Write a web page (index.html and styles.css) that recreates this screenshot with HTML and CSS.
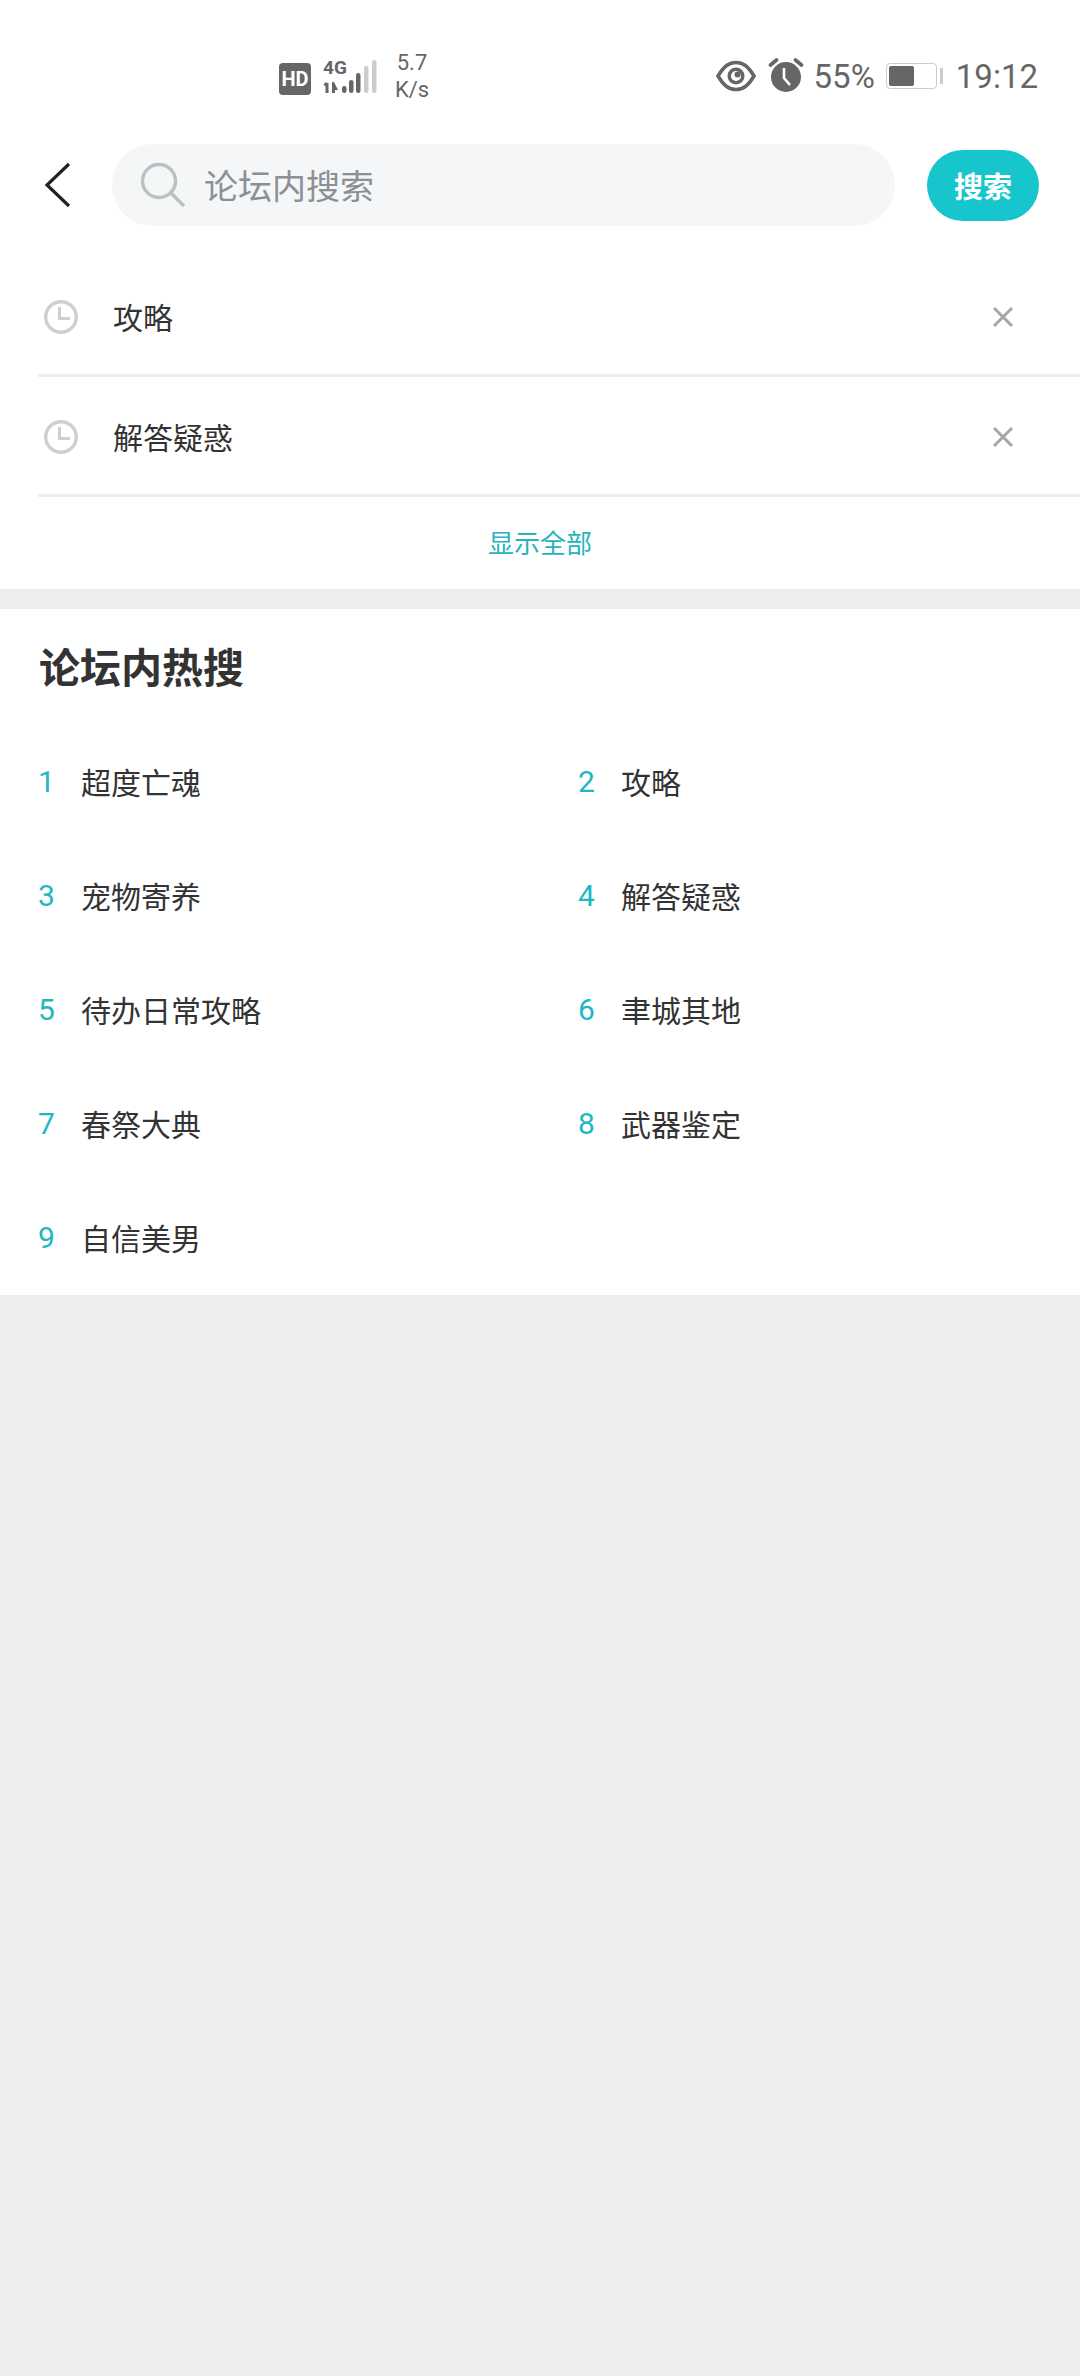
FILE: index.html
```html
<!DOCTYPE html>
<html lang="zh-CN">
<head>
  <meta charset="UTF-8">
  <meta name="viewport" content="width=device-width, initial-scale=1.0">
  <title>论坛内搜索</title>
  <link rel="stylesheet" href="styles.css">
</head>
<body>
  <div class="top">
    <!-- Status bar -->
    <div class="status-bar">
      <div class="status-left">
        <span class="hd">HD</span>
        <svg class="signal" width="54" height="46" viewBox="0 -8 54 46">
          <text x="0" y="14" class="signal-text">4G</text>
          <path d="M4 23v10M1.500 25.500l2.500-2.500" stroke="#666" stroke-width="3" fill="none"/>
          <path d="M9 22h2l4 8h-3v3h-3z" fill="#666"/>
          <rect x="19" y="26" width="4.500" height="7" rx="2.200" fill="#666"/>
          <rect x="26" y="20" width="4.500" height="13" rx="2.200" fill="#666"/>
          <rect x="33" y="13" width="4.500" height="20" rx="2.200" fill="#666"/>
          <rect x="41" y="6" width="4.500" height="27" rx="2.200" fill="#ccc"/>
          <rect x="49" y="0" width="4.500" height="33" rx="2.200" fill="#ccc"/>
        </svg>
        <div class="speed">5.7<br>K/s</div>
      </div>
      <div class="status-right">
        <svg width="40" height="32" viewBox="0 0 40 32">
          <path d="M2 16C8 6 13 2.500 20 2.500S32 6 38 16c-6 10-11 13.500-18 13.500S8 26 2 16z" fill="none" stroke="#666" stroke-width="3.600"/>
          <circle cx="20" cy="16" r="8.500" fill="#666"/>
          <circle cx="20" cy="16" r="5" fill="#fff"/>
          <circle cx="21.500" cy="14.500" r="3" fill="#666"/>
        </svg>
        <svg class="alarm" width="36" height="36" viewBox="0 0 36 36">
          <circle cx="18" cy="20" r="15" fill="#666"/>
          <path d="M2.500 8l6-5M33.500 8l-6-5" stroke="#666" stroke-width="3.600" stroke-linecap="round"/>
          <path d="M16 11v10l6 7" stroke="#fff" stroke-width="2.600" fill="none"/>
        </svg>
        <span class="battery-text">55%</span>
        <div class="battery">
          <div class="battery-body"><div class="battery-level"></div></div>
          <div class="battery-tip"></div>
        </div>
        <span class="clock">19:12</span>
      </div>
    </div>

    <!-- Search -->
    <div class="search-bar">
      <svg class="back" width="28" height="46" viewBox="0 0 28 46">
        <path d="M25 2L3 23l22 21" fill="none" stroke="#222" stroke-width="3.200"/>
      </svg>
      <div class="search-box">
        <svg width="46" height="46" viewBox="0 0 46 46">
          <circle cx="19" cy="19" r="16.500" fill="none" stroke="#b9c1c1" stroke-width="3.400"/>
          <path d="M31 31l13 13" stroke="#b9c1c1" stroke-width="3.400"/>
        </svg>
        <span class="placeholder">论坛内搜索</span>
      </div>
      <button class="search-btn">搜索</button>
    </div>

    <!-- History -->
    <div class="history">
      <div class="history-row">
        <svg width="34" height="34" viewBox="0 0 34 34">
          <circle cx="17" cy="17" r="15.300" fill="none" stroke="#cfcfcf" stroke-width="3.400"/>
          <path d="M15.500 7v11.500H26" fill="none" stroke="#cfcfcf" stroke-width="3"/>
        </svg>
        <span class="history-text">攻略</span>
        <svg class="close" width="22" height="22" viewBox="0 0 22 22">
          <path d="M2 2l18 18M20 2L2 20" stroke="#a6a6a6" stroke-width="3"/>
        </svg>
      </div>
      <div class="history-row">
        <svg width="34" height="34" viewBox="0 0 34 34">
          <circle cx="17" cy="17" r="15.300" fill="none" stroke="#cfcfcf" stroke-width="3.400"/>
          <path d="M15.500 7v11.500H26" fill="none" stroke="#cfcfcf" stroke-width="3"/>
        </svg>
        <span class="history-text">解答疑惑</span>
        <svg class="close" width="22" height="22" viewBox="0 0 22 22">
          <path d="M2 2l18 18M20 2L2 20" stroke="#a6a6a6" stroke-width="3"/>
        </svg>
      </div>
      <div class="show-all">显示全部</div>
    </div>
  </div>

  <!-- Hot searches -->
  <div class="hot">
    <h2>论坛内热搜</h2>
    <div class="hot-grid">
      <div class="hot-item"><span class="num">1</span>超度亡魂</div>
      <div class="hot-item"><span class="num">2</span>攻略</div>
      <div class="hot-item"><span class="num">3</span>宠物寄养</div>
      <div class="hot-item"><span class="num">4</span>解答疑惑</div>
      <div class="hot-item"><span class="num">5</span>待办日常攻略</div>
      <div class="hot-item"><span class="num">6</span>聿城其地</div>
      <div class="hot-item"><span class="num">7</span>春祭大典</div>
      <div class="hot-item"><span class="num">8</span>武器鉴定</div>
      <div class="hot-item"><span class="num">9</span>自信美男</div>
    </div>
  </div>
</body>
</html>
```

FILE: styles.css
```css
html, body {
  margin: 0;
  padding: 0;
}

body {
  width: 1080px;
  height: 2376px;
  overflow: hidden;
  background-color: #eeeeee;
  font-family: Roboto, "Noto Sans CJK SC", sans-serif;
  color: #333;
}

.top {
  background-color: white;
  height: 589px;
}

/* Status bar */
.status-bar {
  height: 144px;
  box-sizing: border-box;
  padding: 46px 42px 0 279px;
  display: flex;
  justify-content: space-between;
  align-items: flex-start;
  color: #666;
}

.status-left {
  display: flex;
  align-items: center;
  height: 60px;
}

.hd {
  width: 32px;
  height: 32px;
  margin-top: 6px;
  border-radius: 4px;
  background-color: #666;
  color: white;
  font-size: 20px;
  font-weight: 700;
  line-height: 32px;
  text-align: center;
  margin-right: 12px;
}

.signal {
  margin-top: -3px;
}

.signal-text {
  font-family: "Liberation Sans Narrow", Roboto, sans-serif;
  font-size: 19px;
  font-weight: 700;
  fill: #666;
}

.speed {
  margin-left: 17px;
  width: 36px;
  font-size: 22px;
  line-height: 27px;
  text-align: center;
}

.status-right {
  display: flex;
  align-items: center;
  height: 60px;
}

.alarm {
  margin-left: 12px;
  margin-top: -2px;
}

.battery-text {
  margin-left: 10px;
  font-size: 33px;
}

.battery {
  margin-left: 11px;
  display: flex;
  align-items: center;
}

.battery-body {
  width: 45px;
  height: 20px;
  border: 1.5px solid #ccc;
  border-radius: 4px;
  padding: 2px;
}

.battery-level {
  width: 25px;
  height: 100%;
  background-color: #666;
  border-radius: 2px;
}

.battery-tip {
  width: 3px;
  height: 16px;
  margin-left: 3px;
  background-color: #ccc;
}

.clock {
  margin-left: 13px;
  font-size: 33px;
}

/* Search */
.search-bar {
  display: flex;
  align-items: center;
  height: 82px;
  padding-left: 44px;
}

.back {
  margin-right: 40px;
}

.search-box {
  width: 783px;
  height: 82px;
  border-radius: 41px;
  background-color: #f4f6f8;
  display: flex;
  align-items: center;
  box-sizing: border-box;
  padding-left: 28px;
}

.placeholder {
  margin-left: 18px;
  margin-bottom: 2px;
  font-size: 34px;
  color: #8a9094;
}

.search-btn {
  margin-left: 32px;
  width: 112px;
  height: 71px;
  border: none;
  border-radius: 36px;
  background-color: #17c5cd;
  color: white;
  font-family: inherit;
  font-size: 29px;
  font-weight: 700;
  padding: 0;
}

/* History */
.history {
  margin-top: 31px;
  margin-left: 38px;
}

.history-row {
  height: 120px;
  box-sizing: border-box;
  padding: 3px 0 0 6px;
  border-bottom: 3px solid #eeeeee;
  display: flex;
  align-items: center;
}

.history-text {
  margin-left: 35px;
  margin-bottom: 3px;
  font-size: 30px;
  flex: 1;
}

.close {
  margin-right: 66px;
}

.show-all {
  margin-left: -38px;
  text-align: center;
  font-size: 26px;
  line-height: 94px;
  color: #26b3bd;
}

/* Hot searches */
.hot {
  margin-top: 20px;
  height: 686px;
  background-color: white;
  box-sizing: border-box;
  padding: 30px 0 0 39px;
}

.hot h2 {
  margin: 0;
  font-size: 41px;
  font-weight: 700;
  line-height: 60px;
}

.hot-grid {
  margin: 25px 0 0 -1px;
  display: grid;
  grid-template-columns: 540px 1fr;
  grid-auto-rows: 114px;
}

.hot-item {
  display: flex;
  align-items: center;
  font-size: 30px;
}

.num {
  width: 43px;
  color: #1fb7c3;
}
```
